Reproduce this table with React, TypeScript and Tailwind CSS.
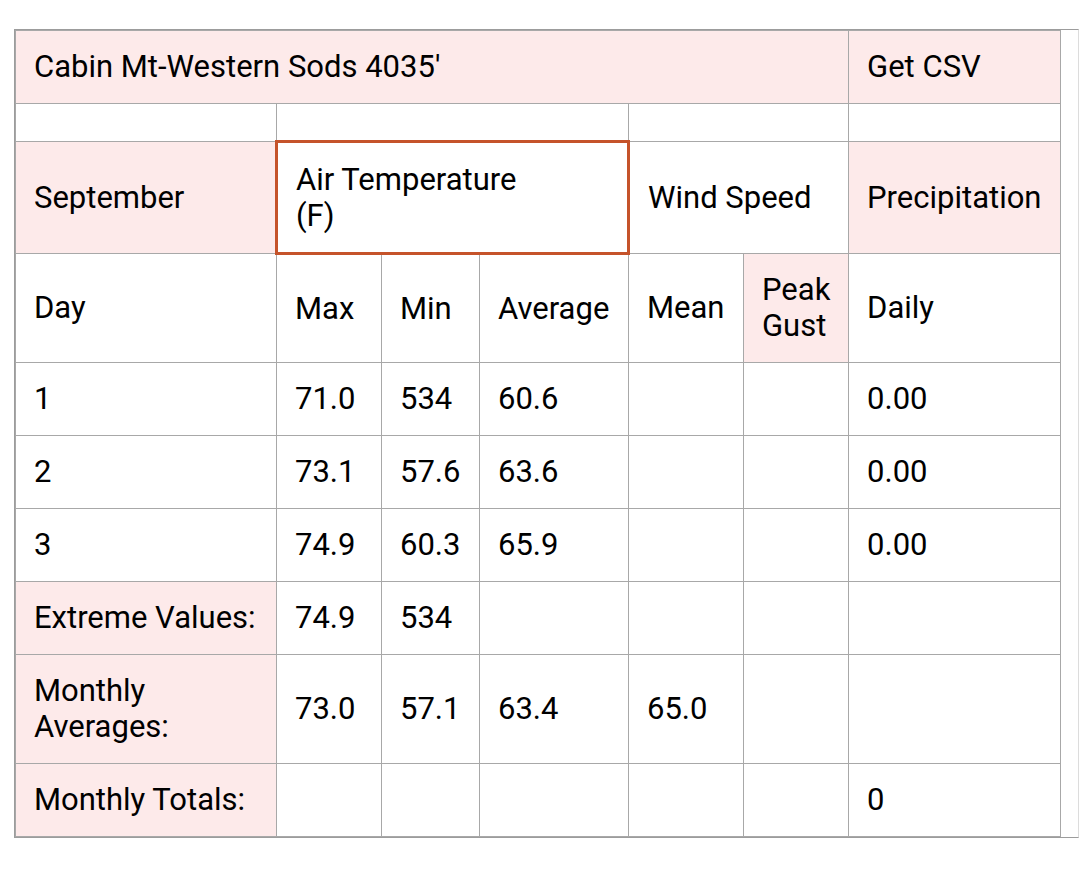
import React from 'react';

const cell = 'border border-[#a8a8a8] px-[18px] py-[18px] align-middle font-normal text-left';
const pink = 'bg-[#fdeaea]';

interface DayRow {
  day: string;
  max: string;
  min: string;
  avg: string;
  daily: string;
}

const days: DayRow[] = [
  { day: '1', max: '71.0', min: '534', avg: '60.6', daily: '0.00' },
  { day: '2', max: '73.1', min: '57.6', avg: '63.6', daily: '0.00' },
  { day: '3', max: '74.9', min: '60.3', avg: '65.9', daily: '0.00' },
];

export default function App() {
  return (
    <div className="min-h-[869px] bg-white pt-[29px] pl-[14px] font-['Roboto','Liberation_Sans',sans-serif] text-[31px] leading-[36px] text-black">
      <div className="w-[1065px] border border-[#9c9c9c] border-r-[#dcdcdc]">
        <table className="w-[1045px] table-fixed border-collapse">
          <colgroup>
            <col className="w-[261px]" />
            <col className="w-[105px]" />
            <col className="w-[98px]" />
            <col className="w-[149px]" />
            <col className="w-[115px]" />
            <col className="w-[105px]" />
            <col className="w-[212px]" />
          </colgroup>
          <tbody>
            {/* Station title */}
            <tr>
              <td colSpan={6} className={`${cell} ${pink}`}>Cabin Mt-Western Sods 4035'</td>
              <td className={`${cell} ${pink}`}>Get CSV</td>
            </tr>

            {/* Spacer row */}
            <tr>
              <td className={cell}></td>
              <td colSpan={3} className={cell}></td>
              <td colSpan={2} className={cell}></td>
              <td className={cell}></td>
            </tr>

            {/* Group headers */}
            <tr>
              <th className={`${cell} ${pink} h-[112px]`}>September</th>
              <th colSpan={3} className={`${cell} border-[3px] border-[#c5532a]`}>
                Air Temperature
                <br />
                (F)
              </th>
              <th colSpan={2} className={cell}>Wind Speed</th>
              <th className={`${cell} ${pink}`}>Precipitation</th>
            </tr>

            {/* Column headers */}
            <tr>
              <th className={cell}>Day</th>
              <th className={cell}>Max</th>
              <th className={cell}>Min</th>
              <th className={cell}>Average</th>
              <th className={cell}>Mean</th>
              <th className={`${cell} ${pink}`}>
                Peak
                <br />
                Gust
              </th>
              <th className={cell}>Daily</th>
            </tr>

            {days.map((d) => (
              <tr key={d.day}>
                <td className={cell}>{d.day}</td>
                <td className={cell}>{d.max}</td>
                <td className={cell}>{d.min}</td>
                <td className={cell}>{d.avg}</td>
                <td className={cell}></td>
                <td className={cell}></td>
                <td className={cell}>{d.daily}</td>
              </tr>
            ))}

            {/* Summary rows */}
            <tr>
              <td className={`${cell} ${pink}`}>Extreme Values:</td>
              <td className={cell}>74.9</td>
              <td className={cell}>534</td>
              <td className={cell}></td>
              <td className={cell}></td>
              <td className={cell}></td>
              <td className={cell}></td>
            </tr>
            <tr>
              <td className={`${cell} ${pink}`}>
                Monthly
                <br />
                Averages:
              </td>
              <td className={cell}>73.0</td>
              <td className={cell}>57.1</td>
              <td className={cell}>63.4</td>
              <td className={cell}>65.0</td>
              <td className={cell}></td>
              <td className={cell}></td>
            </tr>
            <tr>
              <td className={`${cell} ${pink}`}>Monthly Totals:</td>
              <td className={cell}></td>
              <td className={cell}></td>
              <td className={cell}></td>
              <td className={cell}></td>
              <td className={cell}></td>
              <td className={cell}>0</td>
            </tr>
          </tbody>
        </table>
      </div>
    </div>
  );
}
